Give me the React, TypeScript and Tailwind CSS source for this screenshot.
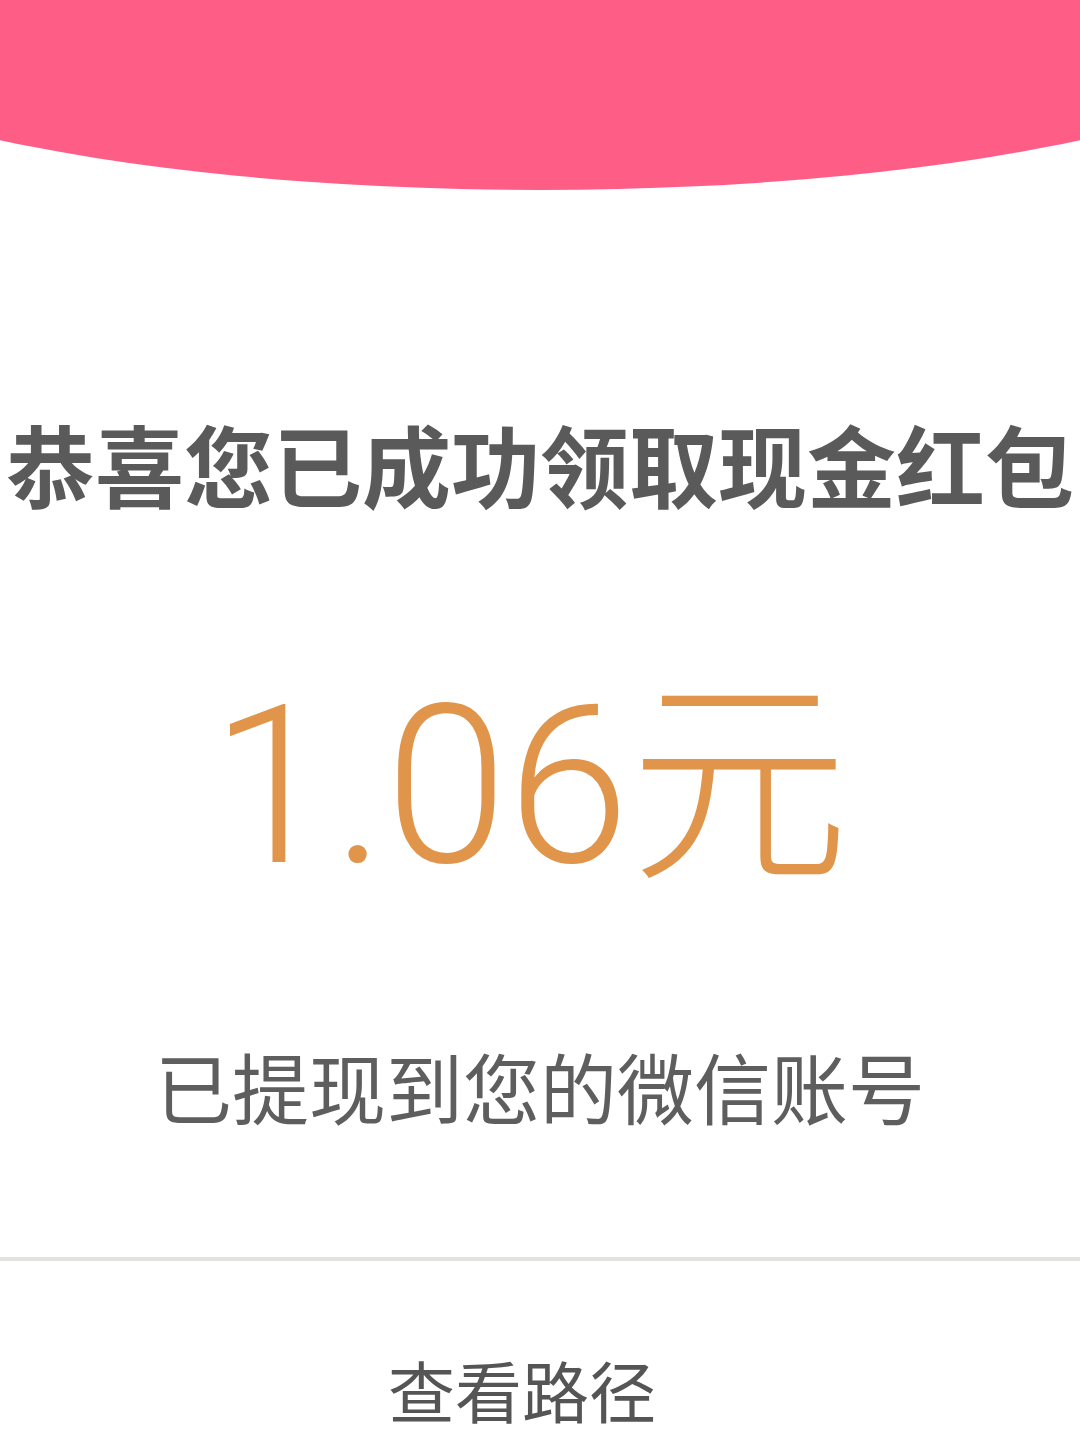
export default function App() {
  return (
    <div className="w-[1080px] h-[1439px] bg-white overflow-hidden flex flex-col items-center font-['Noto_Sans_CJK_SC',sans-serif]">
      {/* pink header with curved bottom */}
      <div className="w-full flex justify-center overflow-hidden shrink-0">
        <div className="w-[1600px] h-[190px] shrink-0 bg-[#fe5d86] rounded-b-[50%_100%]" />
      </div>

      <h1 className="mt-[228px] text-[89px] leading-none font-bold text-[#5a5a5a] whitespace-nowrap">
        恭喜您已成功领取现金红包
      </h1>

      <div className="mt-[170px] mr-[20px] text-[220px] leading-none font-light text-[#e0954a] whitespace-nowrap font-['Roboto','Noto_Sans_CJK_SC',sans-serif]">
        1.06元
      </div>

      <p className="mt-[150px] text-[77px] leading-none text-[#5e5e5e] whitespace-nowrap">
        已提现到您的微信账号
      </p>

      <div className="mt-[133px] w-full h-[4px] bg-[#e4e2de]" />

      <button className="mt-[94px] mr-[36px] text-[67px] leading-none text-[#555555] whitespace-nowrap">
        查看路径
      </button>
    </div>
  );
}
